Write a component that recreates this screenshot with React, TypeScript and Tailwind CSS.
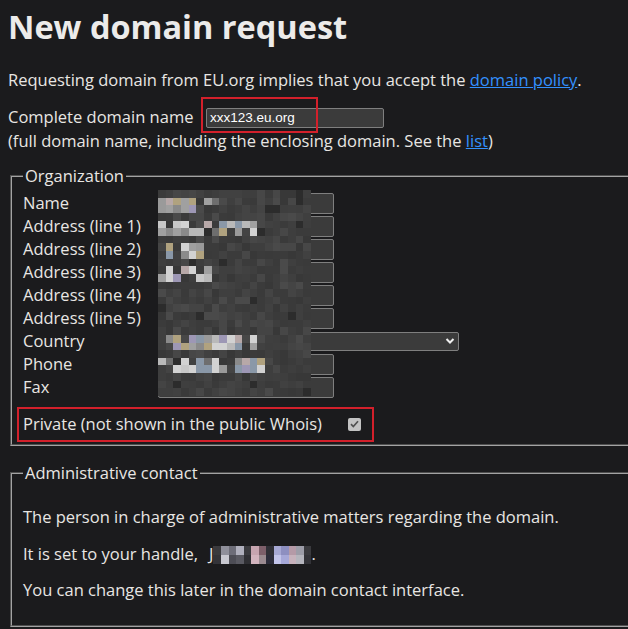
import React from "react";

function rng(seed: number) {
  let s = seed >>> 0;
  return () => {
    s = (s + 0x6d2b79f5) >>> 0;
    let t = s;
    t = Math.imul(t ^ (t >>> 15), t | 1);
    t ^= t + Math.imul(t ^ (t >>> 7), t | 61);
    return ((t ^ (t >>> 14)) >>> 0) / 4294967296;
  };
}

const GRAYS = ["#3b3b3b", "#3e3e3e", "#414141", "#3a3a3a", "#444444", "#474747", "#383838", "#3b3b3b", "#4a4a4a", "#3f3f3f"];
const BRIGHT = ["#9a9a9a", "#b9b9b9", "#d2d2d2", "#b0a27f", "#9d97b5", "#b7a8a8", "#8a98a8", "#c8c8c8", "#8a8a8a", "#6e6e6e", "#a0a0a0"];

function OrgMosaic() {
  const r = rng(7);
  const cols = 20;
  const rows = 27;
  const cw = 153 / cols;
  const ch = 206 / rows;
  const widths = [58, 98, 46, 52, 0, 0, 100, 106, 0];
  const cells: React.ReactNode[] = [];
  for (let y = 0; y < rows; y++) {
    for (let x = 0; x < cols; x++) {
      const cx = 158 + (x + 0.5) * cw;
      const cy = 190 + (y + 0.5) * ch;
      let color = GRAYS[Math.floor(r() * GRAYS.length)];
      for (let i = 0; i < widths.length; i++) {
        const top = 193 + 23 * i + 4;
        if (cy > top && cy < top + 13 && cx > 161 && cx < 161 + widths[i]) {
          if (r() < 0.72) color = BRIGHT[Math.floor(r() * BRIGHT.length)];
        }
      }
      if (r() < 0.04) color = "#2c2c2c";
      cells.push(<div key={`${x}-${y}`} style={{ backgroundColor: color }} />);
    }
  }
  return (
    <div className="absolute left-[158px] top-[190px] grid h-[206px] w-[153px] grid-cols-[repeat(20,1fr)] grid-rows-[repeat(27,1fr)]">
      {cells}
    </div>
  );
}

function HandleMosaic() {
  const colors = [
    "#3a3a3e", "#8f8f9a", "#6d6d78", "#b0b0bd", "#3a3a3e", "#c7a5b0", "#7d5f6a", "#2f2f36", "#a6a8d4", "#8d8fc0", "#b59aa7", "#9d9da8", "#3a3a3e",
    "#333338", "#c8c8d0", "#4d4d55", "#5a5a62", "#2f2f33", "#d3b4be", "#9a8a90", "#2c2c3a", "#c2c4ea", "#a6a8d8", "#c7b2bc", "#b5b5bd", "#333338",
  ];
  return (
    <span className="relative top-[3px] inline-grid h-[18px] w-[98px] grid-cols-[repeat(13,1fr)] grid-rows-2 align-top">
      {colors.map((c, i) => (
        <span key={i} style={{ backgroundColor: c }} />
      ))}
    </span>
  );
}

export default function App() {
  const labels = [
    "Name",
    "Address (line 1)",
    "Address (line 2)",
    "Address (line 3)",
    "Address (line 4)",
    "Address (line 5)",
    "Country",
    "Phone",
    "Fax",
  ];
  return (
    <div className="relative h-[629px] w-[628px] overflow-hidden bg-[#1b1b1d] font-['Open_Sans',sans-serif] text-[16.5px] text-[#e8e6e3]">
      <div className="pl-2 pt-[5px]">
        <h1 className="text-[32.5px] font-bold leading-[44px] text-[#ecebea]">New domain request</h1>
        <p className="mt-[20px] leading-[22px]">
          Requesting domain from EU.org implies that you accept the{" "}
          <a className="text-[#3391ff] underline">domain policy</a>.
        </p>
        <div className="mt-[15px] flex h-[24px] items-start">
          <span className="w-[198px] leading-[22px]">Complete domain name</span>
          <div className="mt-[2px] flex h-[20px] w-[178px] items-center rounded-[2px] border border-[#7f7f7f] bg-[#3b3b3b] pl-[3px] font-['Liberation_Sans',Arial,sans-serif] text-[13.5px] text-white">
            xxx123.eu.org
          </div>
        </div>
        <p className="leading-[22px]">
          (full domain name, including the enclosing domain. See the{" "}
          <a className="text-[#3391ff] underline">list</a>)
        </p>

        <fieldset className="mt-[13px] ml-[2px] w-[640px] border-2 border-[#a3a3a3] px-[11px] pt-[6px] pb-[9px] [border-style:groove]">
          <legend className="px-[2px] leading-[22px]">Organization</legend>
          <div className="grid grid-cols-[135px_1fr] gap-y-[2px]">
            {labels.map((l) => (
              <React.Fragment key={l}>
                <div className="h-[21px] leading-[19px]">{l}</div>
                <div className="flex h-[21px] items-center">
                  {l === "Country" ? (
                    <div className="relative h-[19px] w-[301px] rounded-[2px] border border-[#7f7f7f] bg-[#3b3b3b]">
                      <svg
                        className="absolute right-[3px] top-[4px]"
                        width="10"
                        height="8"
                        viewBox="0 0 10 8"
                        fill="none"
                        stroke="#f0f0f0"
                        strokeWidth="2"
                      >
                        <path d="M1.5 2 L5 5.5 L8.5 2" />
                      </svg>
                    </div>
                  ) : (
                    <div className="h-[21px] w-[176px] rounded-[2px] border border-[#7f7f7f] bg-[#3b3b3b]" />
                  )}
                </div>
              </React.Fragment>
            ))}
          </div>
          <div className="mt-[15px] flex h-[22px] items-center leading-[22px]">
            <span>Private (not shown in the public Whois)</span>
            <span className="ml-[26px] flex h-[13px] w-[13px] items-center justify-center rounded-[2px] bg-[#c3c3c3]">
              <svg width="9" height="8" viewBox="0 0 9 8" fill="none" stroke="#505050" strokeWidth="1.7">
                <path d="M1 4.2 L3.3 6.5 L8 1.2" />
              </svg>
            </span>
          </div>
        </fieldset>

        <fieldset className="mt-[16px] ml-[2px] w-[640px] border-2 border-[#a3a3a3] px-[11px] pt-[22px] pb-[24px] [border-style:groove]">
          <legend className="px-[2px] leading-[22px]">Administrative contact</legend>
          <div className="flex flex-col gap-[14.5px] leading-[22px]">
            <p>The person in charge of administrative matters regarding the domain.</p>
            <p className="h-[22px]">
              It is set to your handle,<span className="ml-[11px]">J</span>
              <HandleMosaic />.
            </p>
            <p>You can change this later in the domain contact interface.</p>
          </div>
        </fieldset>
      </div>

      <OrgMosaic />
      <div className="absolute left-[201px] top-[97px] h-[36px] w-[117px] border-2 border-[#d3202b]" />
      <div className="absolute left-[17px] top-[407px] h-[35px] w-[357px] border-2 border-[#d3202b]" />
    </div>
  );
}
